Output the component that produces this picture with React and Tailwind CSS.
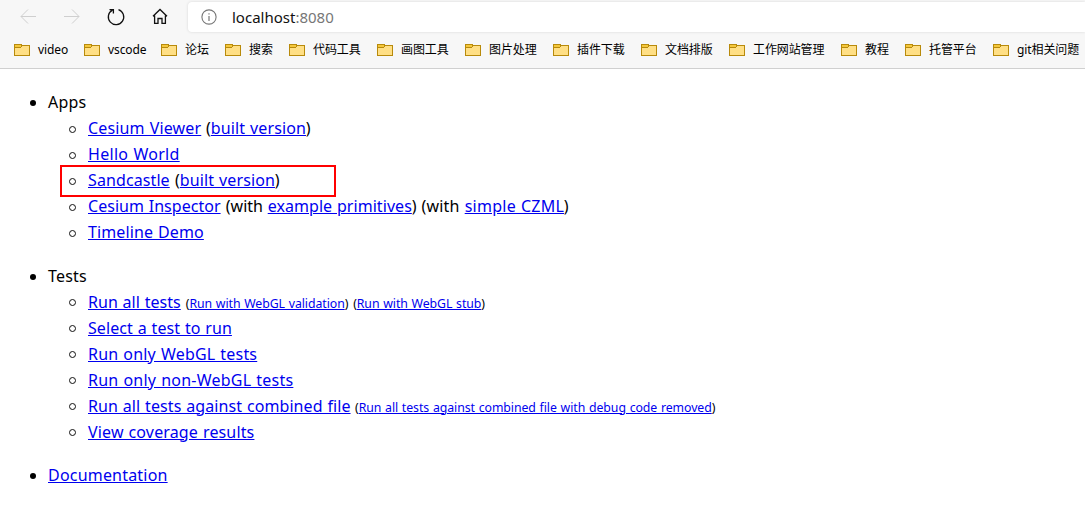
const folders = [
  ['video', 'w-[30px]'],
  ['vscode', 'w-[37px]'],
  ['论坛', 'w-[24px]'],
  ['搜索', 'w-[24px]'],
  ['代码工具', 'w-[48px]'],
  ['画图工具', 'w-[48px]'],
  ['图片处理', 'w-[48px]'],
  ['插件下载', 'w-[48px]'],
  ['文档排版', 'w-[48px]'],
  ['工作网站管理', 'w-[72px]'],
  ['教程', 'w-[24px]'],
  ['托管平台', 'w-[48px]'],
  ['git相关问题', 'w-[64px]'],
];

function Folder() {
  return (
    <svg className="mt-px size-4 shrink-0" viewBox="0 0 16 16" shapeRendering="crispEdges">
      <path d="M0 2H8V3H16V14H0Z" fill="#b88a0b" />
      <path d="M1 6H7V5H15V13H1Z" fill="#ffdf85" />
      <path d="M1 3H7V5H1Z" fill="#f5c83c" />
      <path d="M8 4H15V5H8Z" fill="#ffdf85" />
    </svg>
  );
}

function Toolbar() {
  return (
    <div className="flex h-[33px] items-start">
      <svg className="h-[33px] w-[188px] shrink-0" viewBox="0 0 188 33" fill="none">
        <g stroke="#cfcfcf">
          <path d="M36 16.5H21M28 9.5L21 16.5L28 23.5" />
          <path d="M64 16.5H79M72 9.5L79 16.5L72 23.5" />
        </g>
        <g stroke="#111" strokeWidth="1.3">
          <path d="M118.5 9.6A7.7 7.7 0 1 1 112.4 10.1M109.5 9.6H113.4V13.4" />
          <path d="M153 16.3L160 9.5L167 16.3M154.6 15.5V23.4H158V18.5H162V23.4H165.4V15.5" />
        </g>
      </svg>
      <div className="mt-[2px] flex h-[30px] flex-1 items-center rounded-l bg-white pl-[13px] shadow-[0_0_3px_#0002]">
        <svg className="mr-[15px] size-4 shrink-0" viewBox="0 0 16 16" fill="none" stroke="#777">
          <circle cx="8" cy="8" r="7.1" strokeWidth="1.1" />
          <path d="M8 7V12M8 4.3V5.6" strokeWidth="1.2" />
        </svg>
        <span className="text-[15px] leading-[20px] text-[#111]">localhost<span className="text-[#777]">:8080</span></span>
      </div>
    </div>
  );
}

function Link({ children, className = '' }) {
  return <a href="#" className={`inline-block whitespace-nowrap text-[#0000ee] underline ${className}`}>{children}</a>;
}

function Row({ children }) {
  return (
    <li className="flex h-[26px] items-center">
      <span className="-ml-[19px] mr-[12px] size-[7px] shrink-0 translate-y-px rounded-full border border-[#111]" />
      <span className="h-[26px] whitespace-pre leading-[26px] [word-spacing:0.6px]">{children}</span>
    </li>
  );
}

function Note({ children }) {
  return <small className="text-[12.3px] leading-[20px] tracking-[-0.06px]">({children})</small>;
}

function Group({ title, children }) {
  return (
    <li className="mb-[17.6px]">
      <div className="flex h-[26px] items-center">
        <span className="-ml-[18px] mr-[12px] size-[6px] translate-y-px rounded-full bg-black" />
        <span className="tracking-[0.2px]">{title}</span>
      </div>
      {children && <ul className="pl-10">{children}</ul>}
    </li>
  );
}

export default function App() {
  return (
    <div className="h-[518px] w-[1085px] overflow-hidden bg-white font-['Noto_Sans','Noto_Sans_CJK_SC',sans-serif] text-[16px] text-black">
      <header className="h-[69px] overflow-hidden border-b border-[#d0d0d0] bg-[#f7f7f7]">
        <Toolbar />
        <nav className="flex h-[33px] items-center gap-4 pl-[14px]">
          {folders.map(([name, width]) => (
            <div key={name} className="flex shrink-0 items-center gap-2">
              <Folder />
              <span className={`${width} whitespace-nowrap text-[12px] leading-[18px] tracking-[-0.1px]`}>{name}</span>
            </div>
          ))}
        </nav>
      </header>
      <div className="relative pt-5 pl-12">
        <ul>
          <Group title="Apps">
            <Row><Link className="w-[113px] tracking-[0.16px]">Cesium Viewer</Link><span className="ml-[5px]">(</span><Link className="w-[95px] tracking-[0.12px]">built version</Link>)</Row>
            <Row><Link className="w-[92px] tracking-[0.3px]">Hello World</Link></Row>
            <Row><Link className="w-[82px] tracking-[0.1px]">Sandcastle</Link><span className="ml-[5px]">(</span><Link className="w-[95px] tracking-[0.12px]">built version</Link>)</Row>
            <Row><Link className="w-[133px] tracking-[0.03px]">Cesium Inspector</Link> (with <Link className="w-[144px] tracking-[0.05px]">example primitives</Link>)<span className="ml-[5px] mr-[5px] tracking-[0.2px]">(with</span><Link className="w-[99px] tracking-[0.25px]">simple CZML</Link>)</Row>
            <Row><Link className="tracking-[0.12px]">Timeline Demo</Link></Row>
          </Group>
          <Group title="Tests">
            <Row><Link className="w-[93px] tracking-[0.03px]">Run all tests</Link> <Note><Link>Run with WebGL validation</Link></Note> <Note><Link>Run with WebGL stub</Link></Note></Row>
            <Row><Link className="tracking-[0.07px]">Select a test to run</Link></Row>
            <Row><Link className="tracking-[0.2px]">Run only WebGL tests</Link></Row>
            <Row><Link className="tracking-[0.23px]">Run only non-WebGL tests</Link></Row>
            <Row><Link className="w-[262px] tracking-[0.08px]">Run all tests against combined file</Link><span className="ml-[5px]"><Note><Link>Run all tests against combined file with debug code removed</Link></Note></span></Row>
            <Row><Link className="tracking-[0.15px]">View coverage results</Link></Row>
          </Group>
          <Group title={<Link>Documentation</Link>} />
        </ul>
        <div className="absolute top-[96px] left-[60px] h-[32px] w-[276px] border-2 border-[#ff0000]" />
      </div>
    </div>
  );
}
